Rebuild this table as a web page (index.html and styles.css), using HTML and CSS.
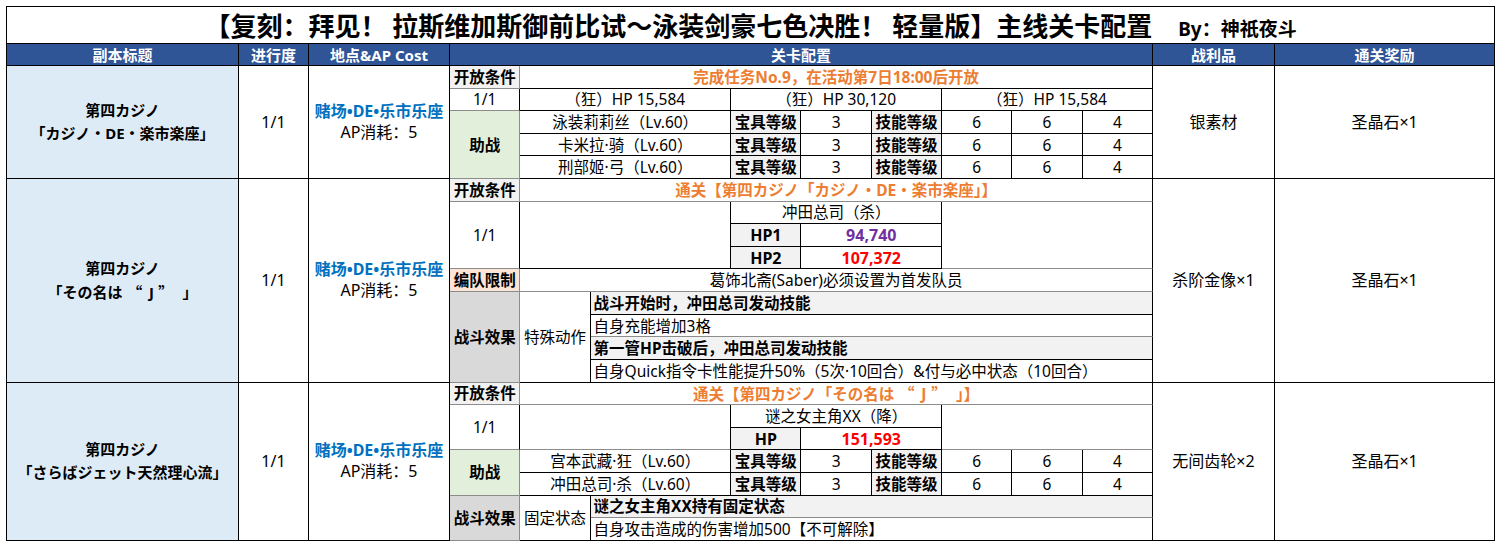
FILE: index.html
```html
<!DOCTYPE html>
<html lang="zh-CN">
<head>
<meta charset="utf-8">
<title>主线关卡配置</title>
<link rel="stylesheet" href="styles.css">
</head>
<body>
<table class="sheet">
  <colgroup>
    <col class="w-a"><col class="w-b"><col class="w-c">
    <col class="w-d"><col class="w-d"><col class="w-d"><col class="w-d"><col class="w-d">
    <col class="w-d"><col class="w-d"><col class="w-d"><col class="w-d"><col class="w-d">
    <col class="w-e"><col class="w-f">
  </colgroup>
  <tr class="r-title">
    <td colspan="15" class="title">【复刻：拜见！ 拉斯维加斯御前比试～泳装剑豪七色决胜！ 轻量版】主线关卡配置<span class="by">By：神祇夜斗</span></td>
  </tr>
  <tr class="r-head">
    <th>副本标题</th><th>进行度</th><th>地点&amp;AP Cost</th><th colspan="10">关卡配置</th><th>战利品</th><th>通关奖励</th>
  </tr>

  <!-- Stage 1 -->
  <tr>
    <td rowspan="5" class="stage">第四カジノ<br>「カジノ・DE・楽市楽座」</td>
    <td rowspan="5" class="big">1/1</td>
    <td rowspan="5" class="loc"><span class="place">赌场•DE•乐市乐座</span><br>AP消耗：5</td>
    <td class="lbl">开放条件</td>
    <td colspan="9" class="cond">完成任务No.9，在活动第7日18:00后开放</td>
    <td rowspan="5" class="big">银素材</td>
    <td rowspan="5" class="big">圣晶石×1</td>
  </tr>
  <tr>
    <td class="soft">1/1</td>
    <td colspan="3">（狂）HP 15,584</td>
    <td colspan="3">（狂）HP 30,120</td>
    <td colspan="3">（狂）HP 15,584</td>
  </tr>
  <tr>
    <td rowspan="3" class="lbl sup">助战</td>
    <td colspan="3">泳装莉莉丝（Lv.60）</td>
    <td class="key">宝具等级</td><td>3</td><td class="key">技能等级</td><td>6</td><td>6</td><td>4</td>
  </tr>
  <tr>
    <td colspan="3">卡米拉·骑（Lv.60）</td>
    <td class="key">宝具等级</td><td>3</td><td class="key">技能等级</td><td>6</td><td>6</td><td>4</td>
  </tr>
  <tr>
    <td colspan="3">刑部姬·弓（Lv.60）</td>
    <td class="key">宝具等级</td><td>3</td><td class="key">技能等级</td><td>6</td><td>6</td><td>4</td>
  </tr>

  <!-- Stage 2 -->
  <tr>
    <td rowspan="9" class="stage">第四カジノ<br>「その名は<span class="qo">“</span>J<span class="qc">”</span>」</td>
    <td rowspan="9" class="big">1/1</td>
    <td rowspan="9" class="loc"><span class="place">赌场•DE•乐市乐座</span><br>AP消耗：5</td>
    <td class="lbl">开放条件</td>
    <td colspan="9" class="cond soft">通关【第四カジノ「カジノ・DE・楽市楽座」】</td>
    <td rowspan="9" class="big">杀阶金像×1</td>
    <td rowspan="9" class="big">圣晶石×1</td>
  </tr>
  <tr>
    <td rowspan="3" class="soft">1/1</td>
    <td rowspan="3" colspan="3"></td>
    <td colspan="3">冲田总司（杀）</td>
    <td rowspan="3" colspan="3" class="soft"></td>
  </tr>
  <tr>
    <td class="key hp">HP1</td>
    <td colspan="2" class="num purple">94,740</td>
  </tr>
  <tr>
    <td class="key hp">HP2</td>
    <td colspan="2" class="num red">107,372</td>
  </tr>
  <tr>
    <td class="lbl team">编队限制</td>
    <td colspan="9" class="soft">葛饰北斋(Saber)必须设置为首发队员</td>
  </tr>
  <tr>
    <td rowspan="4" class="lbl eff">战斗效果</td>
    <td rowspan="4">特殊动作</td>
    <td colspan="8" class="efh">战斗开始时，冲田总司发动技能</td>
  </tr>
  <tr>
    <td colspan="8" class="efl soft">自身充能增加3格</td>
  </tr>
  <tr>
    <td colspan="8" class="efh">第一管HP击破后，冲田总司发动技能</td>
  </tr>
  <tr>
    <td colspan="8" class="efl">自身Quick指令卡性能提升50%（5次·10回合）&amp;付与必中状态（10回合）</td>
  </tr>

  <!-- Stage 3 -->
  <tr>
    <td rowspan="7" class="stage">第四カジノ<br>「さらばジェット天然理心流」</td>
    <td rowspan="7" class="big">1/1</td>
    <td rowspan="7" class="loc"><span class="place">赌场•DE•乐市乐座</span><br>AP消耗：5</td>
    <td class="lbl">开放条件</td>
    <td colspan="9" class="cond soft">通关【第四カジノ「その名は<span class="qo">“</span>J<span class="qc">”</span>」】</td>
    <td rowspan="7" class="big">无间齿轮×2</td>
    <td rowspan="7" class="big">圣晶石×1</td>
  </tr>
  <tr>
    <td rowspan="2" class="soft">1/1</td>
    <td rowspan="2" colspan="3" class="soft"></td>
    <td colspan="3">谜之女主角XX（降）</td>
    <td rowspan="2" colspan="3" class="soft"></td>
  </tr>
  <tr>
    <td class="key hp">HP</td>
    <td colspan="2" class="num red">151,593</td>
  </tr>
  <tr>
    <td rowspan="2" class="lbl sup">助战</td>
    <td colspan="3">宫本武藏·狂（Lv.60）</td>
    <td class="key">宝具等级</td><td>3</td><td class="key">技能等级</td><td>6</td><td>6</td><td>4</td>
  </tr>
  <tr>
    <td colspan="3">冲田总司·杀（Lv.60）</td>
    <td class="key">宝具等级</td><td>3</td><td class="key">技能等级</td><td>6</td><td>6</td><td>4</td>
  </tr>
  <tr>
    <td rowspan="2" class="lbl eff">战斗效果</td>
    <td rowspan="2">固定状态</td>
    <td colspan="8" class="efh soft">谜之女主角XX持有固定状态</td>
  </tr>
  <tr>
    <td colspan="8" class="efl">自身攻击造成的伤害增加500【不可解除】</td>
  </tr>
</table>
</body>
</html>
```

FILE: styles.css
```css
html, body {
  margin: 0;
  padding: 0;
  background: #ffffff;
}

body {
  padding: 6px;
}

.sheet {
  border-collapse: separate;
  border-spacing: 0;
  table-layout: fixed;
  width: 1489px;
  border-top: 1px solid #000;
  border-left: 1px solid #000;
  font-family: "Noto Sans", "Noto Sans CJK SC", sans-serif;
  font-size: 15.5px;
  color: #000;
}

.w-a { width: 232px; }
.w-b { width: 70px; }
.w-c { width: 141px; }
.w-d { width: 70.3px; }
.w-e { width: 122px; }
.w-f { width: 220px; }

.sheet td,
.sheet th {
  border-right: 1px solid #000;
  border-bottom: 1px solid #000;
  padding: 0;
  text-align: center;
  vertical-align: middle;
  white-space: nowrap;
  overflow: hidden;
  line-height: 20px;
  font-weight: 400;
}

.sheet tr {
  height: 22.62px;
}

.sheet .r-title {
  height: 37px;
}

.sheet .r-head {
  height: 22px;
}

.sheet .title {
  font-family: "Noto Sans CJK SC", sans-serif;
  font-size: 26px;
  font-weight: 700;
  line-height: 26px;
  overflow: visible;
}

.by {
  font-family: "Noto Sans", "Noto Sans CJK SC", sans-serif;
  font-size: 19px;
  line-height: 19px;
  margin-left: 26px;
}

.r-head th {
  background: #2f5597;
  color: #ffffff;
  font-size: 15px;
  font-weight: 700;
}

.sheet .stage {
  background: #ddebf7;
  font-size: 15px;
  font-weight: 700;
  line-height: 23px;
}

.qo,
.qc {
  display: inline-block;
  font-family: "Noto Sans CJK SC", sans-serif;
}

.qo {
  padding-left: 0.3em;
  padding-right: 0.45em;
}

.qc {
  padding-left: 0.3em;
  padding-right: 0.6em;
}

.big {
  font-size: 16px;
}

.sheet .loc {
  font-size: 16px;
  line-height: 21px;
}

.place {
  color: #0070c0;
  font-weight: 700;
}

.sheet .lbl {
  font-weight: 700;
  background: #f2f2f2;
  border-color: #8c8c8c;
}

.sheet .sup {
  background: #e2efda;
}

.sheet .team {
  background: #fce4d6;
}

.sheet .eff {
  background: #d9d9d9;
}

.sheet .cond {
  color: #ed7d31;
  font-weight: 700;
}

.sheet .soft {
  border-bottom-color: #8c8c8c;
}

.sheet .key {
  background: #f2f2f2;
  font-weight: 700;
}

.sheet .hp {
  font-size: 16px;
}

.sheet .num {
  font-size: 16px;
  font-weight: 700;
}

.purple {
  color: #7030a0;
}

.red {
  color: #ff0000;
}

.sheet .efh {
  text-align: left;
  padding-left: 3px;
  background: #f2f2f2;
  font-weight: 700;
}

.sheet .efl {
  text-align: left;
  padding-left: 3px;
}
```
